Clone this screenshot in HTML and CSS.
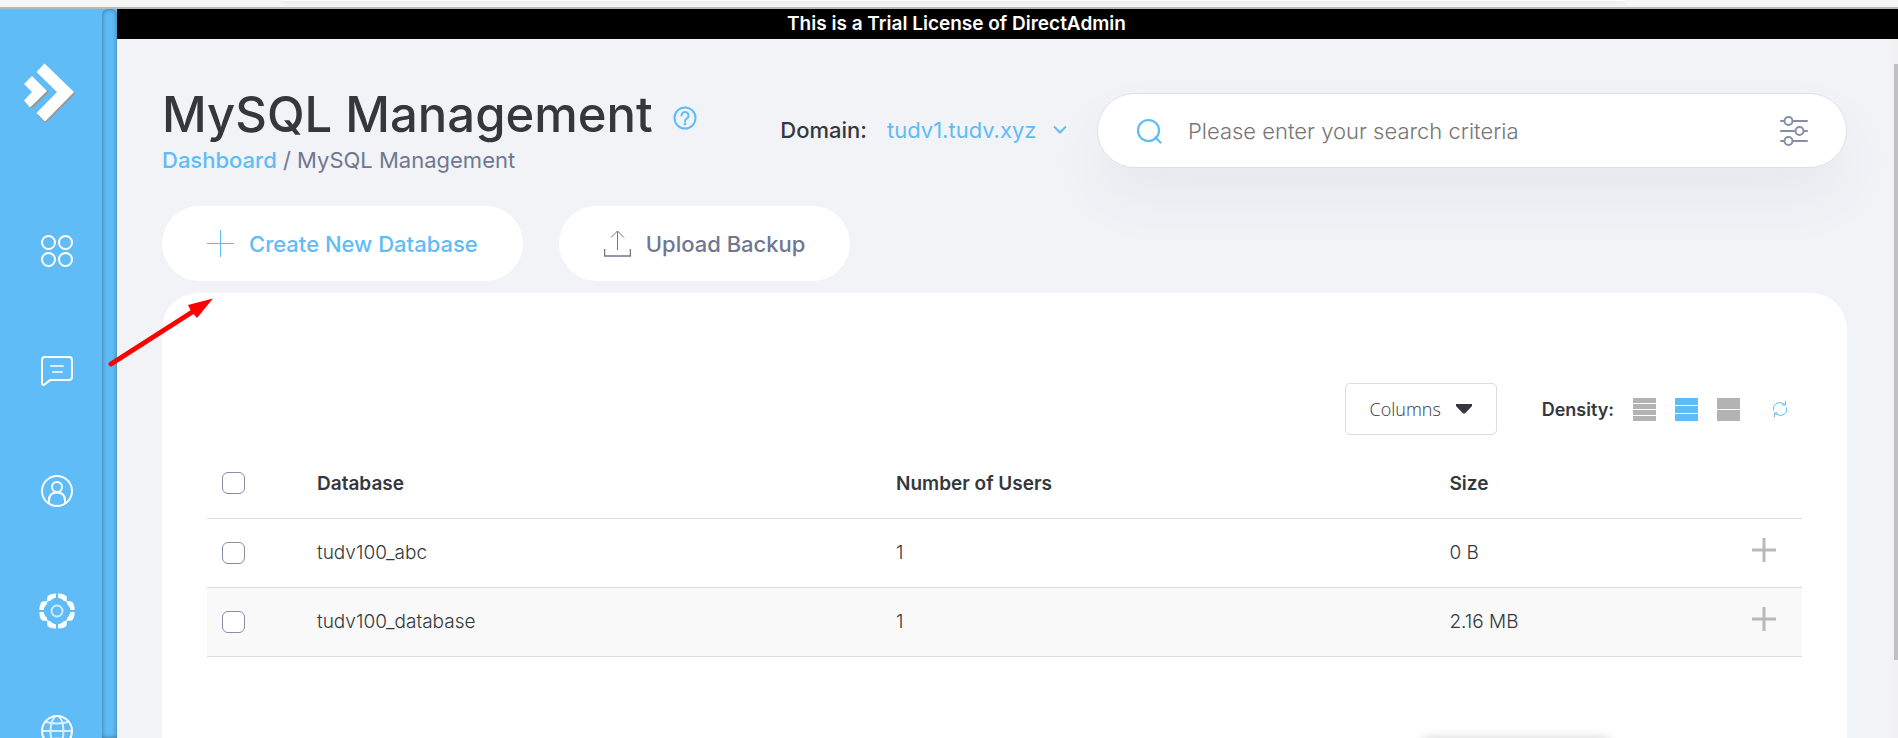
FILE: index.html
```html
<!DOCTYPE html>
<html lang="en">
<head>
<meta charset="utf-8">
<title>MySQL Management</title>
<link rel="stylesheet" href="styles.css">
</head>
<body>
<div class="chrome"><div class="chrome-bar"></div></div>
<div class="app">
  <aside class="sidebar">
    <nav class="nav" aria-label="Main">
      <a class="logo" href="#" aria-label="DirectAdmin">
        <svg width="54" height="62" viewBox="0 0 54 62">
          <path fill="#979a9c" d="M15 53.500L38 31.500l14-1.500 1.500 1.500L24 61l-2-2zM3 40L24.500 27.500 27 30 10 47l-2-2z"/>
          <path fill="#fff" d="M22.500 1.500L52 30 23 59.500 14.500 51 35 30 14.500 10zM10 14l15 15L8 45.500 2 38.500 10 30 2 22z"/>
        </svg>
      </a>
      <a class="nav-link" href="#" aria-label="Apps">
        <svg width="36" height="36" viewBox="0 0 36 36" fill="none" stroke="#fff" stroke-width="2"><circle cx="9.500" cy="9.500" r="6.500"/><circle cx="26.500" cy="9.500" r="6.500"/><circle cx="9.500" cy="26.500" r="6.500"/><circle cx="26.500" cy="26.500" r="6.500"/></svg>
      </a>
      <a class="nav-link" href="#" aria-label="Messages">
        <svg width="36" height="36" viewBox="0 0 36 36" fill="none" stroke="#fff" stroke-width="2" stroke-linecap="round" stroke-linejoin="round"><path d="M6 4h24q3 0 3 3v17q0 3-3 3H12q-1 0-2 1l-4.500 3.500Q3 32.500 3 30V7q0-3 3-3z"/><path opacity=".75" d="M12 13h12M14 19h9"/></svg>
      </a>
      <a class="nav-link" href="#" aria-label="Account">
        <svg width="36" height="36" viewBox="0 0 36 36" fill="none" stroke="#fff" stroke-width="2"><circle cx="18" cy="18" r="15"/><circle cx="18" cy="14" r="5"/><path d="M10 30.500v-3q0-8 8-8t8 8v3"/></svg>
      </a>
      <a class="nav-link" href="#" aria-label="Settings">
        <svg width="36" height="36" viewBox="0 0 36 36" fill="#fff"><g id="teeth"><path d="M17 .500Q12 0 8.500 3L8 8.500l3-.500q2-2.500 6-3.500z"/><path d="M19 .500q5-.500 8.500 2.500L28 8.500 25 8q-2-2.500-6-3.500z"/></g><use href="#teeth" transform="rotate(90 18 18)"/><use href="#teeth" transform="rotate(180 18 18)"/><use href="#teeth" transform="rotate(270 18 18)"/><circle cx="18" cy="18" r="5.500" fill="none" stroke="#fff" stroke-width="2" opacity=".7"/></svg>
      </a>
      <a class="nav-link" href="#" aria-label="Language">
        <svg width="36" height="36" viewBox="0 0 36 36" fill="none" stroke="#fff" stroke-width="2"><circle cx="18" cy="18" r="15"/><g opacity=".75"><ellipse cx="18" cy="18" rx="6.500" ry="15"/><path d="M3 18h30M7 9q11 3 22 0M7 27q11-3 22 0"/></g></svg>
      </a>
    </nav>
    <div class="rail"></div>
  </aside>
  <div class="main">
    <div class="banner">This is a Trial License of DirectAdmin</div>
    <div class="body">
      <main class="content">
        <header class="header">
          <div>
            <div class="title-row">
              <h1 class="title">MySQL Management</h1>
              <button class="icon-button" type="button" aria-label="Help"><svg width="24" height="24" viewBox="0 0 24 24" fill="none" stroke="#5fbcf6" stroke-width="2"><circle cx="12" cy="12" r="10.500"/><path d="M8.500 9.500a3.500 3.500 0 1 1 5.300 3Q12 13.500 12 15.500" stroke-linecap="round"/><circle cx="12" cy="18" r="1" fill="#5fbcf6" stroke-width="1"/></svg></button>
            </div>
            <div class="crumbs"><a class="crumb-link" href="#">Dashboard</a> / MySQL Management</div>
          </div>
          <div class="domain">
            <label class="domain-label" for="domain">Domain:</label>
            <div class="domain-field">
              <select class="domain-select" id="domain"><option>tudv1.tudv.xyz</option></select>
              <svg class="chevron" width="14" height="10" viewBox="0 0 14 10" fill="none" stroke="#5fbcf6" stroke-width="2"><path d="M1 1.500l6 6 6-6"/></svg>
            </div>
          </div>
          <div class="search">
            <svg width="26" height="26" viewBox="0 0 26 26" fill="none" stroke="#5fbcf6" stroke-width="2.200" stroke-linecap="round"><circle cx="12.500" cy="12.500" r="10.500"/><path d="M19.500 19.500l5 5"/></svg>
            <input class="search-input" type="text" aria-label="Search" placeholder="Please enter your search criteria">
            <button class="icon-button" type="button" aria-label="Filters"><svg width="28" height="32" viewBox="0 0 28 32" fill="none" stroke="#858ea6" stroke-width="2" stroke-linecap="round"><path d="M1 6h3M13 6h14M1 16h13M24 16h3M1 26h3M13 26h14"/><circle cx="8.500" cy="6" r="4"/><circle cx="19.500" cy="16" r="4"/><circle cx="8.500" cy="26" r="4"/></svg></button>
          </div>
        </header>
        <div class="actions">
          <button class="pill pill-primary" type="button"><svg width="27" height="27" viewBox="0 0 27 27" stroke="#5fbcf6"><path d="M13.500 0v27M0 13.500h27"/></svg>Create New Database</button>
          <button class="pill" type="button"><svg width="27" height="27" viewBox="0 0 27 27" fill="none" stroke="#6f7791"><path d="M13.500 20V1M7 7.500L13.500 1 20 7.500"/><path d="M.5 19v7h26v-7" stroke-width="1.500"/></svg>Upload Backup</button>
        </div>
        <section class="card">
          <div class="toolbar">
            <button class="columns" type="button">Columns<svg width="16" height="10" viewBox="0 0 16 10" fill="#34383d"><path d="M0 0h16v2L9 9.500H7L0 2z"/></svg></button>
            <div class="density">
              <span class="density-label">Density:</span>
              <button class="icon-button" type="button" aria-label="Compact"><svg width="23" height="23" viewBox="0 0 23 23" fill="#b3b3b3"><path d="M0 0h23v5H0zM0 6h23v5H0zM0 12h23v5H0zM0 18h23v5H0z"/></svg></button>
              <button class="icon-button" type="button" aria-label="Normal"><svg width="23" height="23" viewBox="0 0 23 23" fill="#5fbcf6"><path d="M0 0h23v7H0zM0 8h23v7H0zM0 16h23v7H0z"/></svg></button>
              <button class="icon-button" type="button" aria-label="Spacious"><svg width="23" height="23" viewBox="0 0 23 23" fill="#b3b3b3"><path d="M0 0h23v11H0zM0 12h23v11H0z"/></svg></button>
              <button class="icon-button refresh" type="button" aria-label="Refresh"><svg width="16" height="16" viewBox="0 0 16 16" fill="none" stroke="#5fbcf6"><path d="M1.500 9.500Q.5 5 4 2.500t9 1M14.500 6.500q1 4.500-2.500 7t-9-1M13.500 0v4H10M2.500 16v-4H6"/></svg></button>
            </div>
          </div>
          <table class="table">
            <colgroup><col class="col-check"><col class="col-name"><col class="col-users"><col class="col-size"><col class="col-more"></colgroup>
            <thead>
              <tr><th><input class="check" type="checkbox" aria-label="Select all"></th><th>Database</th><th>Number of Users</th><th>Size</th><th></th></tr>
            </thead>
            <tbody>
              <tr><td><input class="check" type="checkbox" aria-label="Select tudv100_abc"></td><td>tudv100_abc</td><td>1</td><td>0 B</td><td class="more"><button class="icon-button" type="button" aria-label="Expand"><svg width="24" height="24" viewBox="0 0 24 24" stroke="#b9b9ba" stroke-width="3"><path d="M12 0v24M0 12h24"/></svg></button></td></tr>
              <tr><td><input class="check" type="checkbox" aria-label="Select tudv100_database"></td><td>tudv100_database</td><td>1</td><td>2.16 MB</td><td class="more"><button class="icon-button" type="button" aria-label="Expand"><svg width="24" height="24" viewBox="0 0 24 24" stroke="#b9b9ba" stroke-width="3"><path d="M12 0v24M0 12h24"/></svg></button></td></tr>
            </tbody>
          </table>
        </section>
      </main>
      <div class="scrollbar"><div class="thumb"></div></div>
    </div>
  </div>
</div>
<svg class="arrow" width="112" height="74" viewBox="0 0 112 74"><path d="M6 69L92 14" stroke="#f00" stroke-width="5" stroke-linecap="round"/><path fill="#f00" d="M108 3.500L83 10l3 6 6 7z"/></svg>
<div class="popup"></div>
</body>
</html>
```
FILE: styles.css
```css
* { box-sizing: border-box; }

body {
  margin: 0;
  height: 100vh;
  overflow: hidden;
  position: relative;
  display: flex;
  flex-direction: column;
  background: #f1f3f7;
  color: #34383d;
  font-family: Inter, "Liberation Sans", sans-serif;
  font-size: 18px;
}

svg { display: block; flex: none; }

button, input, select { font: inherit; color: inherit; }

.chrome {
  flex: none;
  height: 9px;
  background: #f6f6f6;
  border-bottom: 2px solid #b8b8b8;
  padding: 0 273px 0 282px;
  overflow: hidden;
}

.chrome-bar {
  height: 1px;
  background: #fff;
  box-shadow: 0 1px 4px #ccc;
}

.app { flex: 1; min-height: 0; display: flex; }

.sidebar {
  flex: none;
  display: flex;
  background: #5fbcf6;
  overflow: hidden;
}

.nav {
  width: 102px;
  display: flex;
  flex-direction: column;
  padding-top: 53px;
}

.logo { margin: 0 0 109px 22px; }

.nav-link { margin: 0 0 84px 39px; }

.rail {
  width: 15px;
  border-radius: 6px 6px 0 0;
  box-shadow: inset 0 0 5px rgba(0, 0, 0, .4);
}

.main { flex: 1; min-width: 0; display: flex; flex-direction: column; }

.banner {
  flex: none;
  height: 30px;
  line-height: 30px;
  padding-right: 102px;
  background: #000;
  color: #fff;
  text-align: center;
  font-size: 19px;
  font-weight: 600;
}

.body { flex: 1; min-height: 0; display: flex; }

.content {
  flex: 1;
  min-width: 0;
  padding: 48px 45px 0;
  display: flex;
  flex-direction: column;
}

.header {
  display: grid;
  grid-template-columns: minmax(0, 1fr) auto minmax(400px, 750px);
  align-items: start;
}

.title-row { display: flex; align-items: center; gap: 20px; padding-top: 1px; }

.title {
  margin: 0;
  padding-bottom: 6px;
  font-size: 49px;
  line-height: 54px;
  font-weight: 500;
  white-space: nowrap;
}

.icon-button {
  padding: 0;
  border: 0;
  background: none;
  flex: none;
}

.crumbs { font-size: 22px; line-height: 25px; color: #6f7791; }

.crumb-link { color: #5fbcf6; text-decoration: none; font-weight: 500; }

.domain {
  height: 86px;
  display: flex;
  align-items: center;
  gap: 20px;
  padding-right: 30px;
  font-size: 22px;
}

.domain-label { font-weight: 500; }

.domain-field { display: grid; align-items: center; color: #5fbcf6; }

.domain-select {
  grid-area: 1 / 1;
  appearance: none;
  border: 0;
  padding: 0 30px 0 0;
  background: none;
}

.chevron { grid-area: 1 / 1; justify-self: end; pointer-events: none; }

.search {
  height: 75px;
  margin-top: 6px;
  display: flex;
  align-items: center;
  padding: 0 38px;
  background: #fff;
  border: 1px solid #dde1eb;
  border-radius: 38px;
  box-shadow: 0 30px 60px rgba(60, 60, 110, .06);
}

.search-input {
  flex: 1;
  min-width: 0;
  border: 0;
  padding: 0 26px;
  background: none;
  font-size: 22px;
  font-weight: 300;
}

.search-input::placeholder { color: #757575; }

.actions { display: flex; gap: 36px; margin-top: 33px; }

.pill {
  height: 75px;
  display: flex;
  align-items: center;
  gap: 15px;
  padding: 0 45px;
  border: 0;
  border-radius: 38px;
  background: #fff;
  color: #6f7791;
  font-size: 22px;
  font-weight: 500;
}

.pill-primary { color: #5fbcf6; }

.card {
  flex: 1;
  margin-top: 12px;
  padding: 90px 45px 0;
  background: #fff;
  border-radius: 36px 36px 0 0;
}

.toolbar { display: flex; justify-content: flex-end; gap: 45px; padding-right: 14px; }

.columns {
  height: 52px;
  width: 152px;
  display: flex;
  align-items: center;
  justify-content: center;
  gap: 15px;
  border: 1px solid #dcdcdc;
  border-radius: 5px;
  background: #fff;
  font-family: "Open Sans", "Noto Sans", sans-serif;
  font-weight: 300;
}

.density { display: flex; align-items: center; gap: 19px; }

.density-label { font-weight: 600; }

.refresh { margin-left: 13px; }

.table {
  width: 100%;
  margin-top: 14px;
  border-collapse: collapse;
  table-layout: fixed;
  font-size: 19px;
  font-weight: 300;
}

.table th, .table td {
  height: 69px;
  padding: 0;
  text-align: left;
  border-bottom: 1px solid #dcdcdc;
}

.table th { font-size: 19px; font-weight: 600; }

.table tbody tr:nth-child(even) { background: #f9f9f9; }

.col-check { width: 110px; }
.col-name { width: 36.3%; }
.col-users { width: 34.7%; }
.col-size { width: 19%; }

.table .more { text-align: right; padding: 0 27px 5px 0; }

.more .icon-button { display: inline-block; vertical-align: middle; }

.check {
  appearance: none;
  display: block;
  width: 23px;
  height: 22px;
  margin: 0 0 0 15px;
  border: 1px solid #858ea6;
  border-radius: 6px;
  background: #fff;
}

.scrollbar { flex: none; width: 6px; padding: 25px 0 0 2px; background: #f1f1f1; }

.thumb { height: 596px; background: #c1c1c1; }

.arrow { position: absolute; left: 105px; top: 295px; }

.popup {
  position: absolute;
  left: 75%;
  bottom: -22px;
  width: 184px;
  height: 20px;
  box-shadow: 0 0 12px rgba(0, 0, 0, .25);
}
```
